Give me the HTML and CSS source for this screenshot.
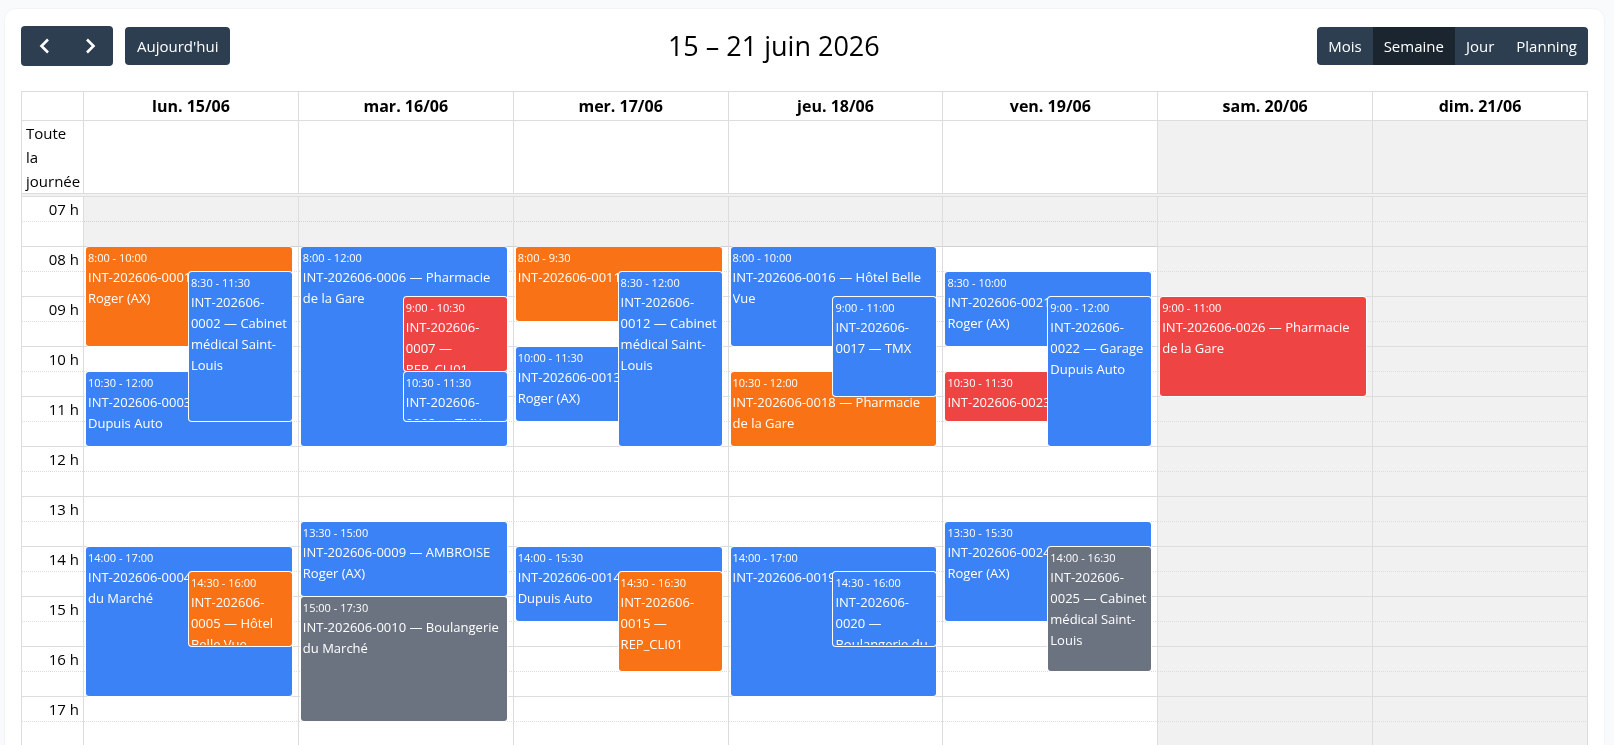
FILE: index.html
```html
<!DOCTYPE html>
<html lang="fr">
<head>
<meta charset="utf-8">
<title>Planning des interventions</title>
<meta name="viewport" content="width=device-width, initial-scale=1">
<link rel="stylesheet" href="styles.css">
</head>
<body>
<main class="card">
  <header class="toolbar">
    <div class="toolbar-start">
      <div class="btn-group">
        <button type="button" class="btn btn-icon" aria-label="Précédent"><svg class="icon" viewBox="0 0 24 24" aria-hidden="true"><path d="M16 5.500 9.500 12l6.500 6.500"/></svg></button>
        <button type="button" class="btn btn-icon" aria-label="Suivant"><svg class="icon" viewBox="0 0 24 24" aria-hidden="true"><path d="M9 5.500 15.500 12l-6.500 6.500"/></svg></button>
      </div>
      <button type="button" class="btn btn-today">Aujourd'hui</button>
    </div>
    <h2 class="title">15 – 21 juin 2026</h2>
    <div class="toolbar-end">
      <div class="btn-group">
        <button type="button" class="btn">Mois</button>
        <button type="button" class="btn active" aria-pressed="true">Semaine</button>
        <button type="button" class="btn">Jour</button>
        <button type="button" class="btn">Planning</button>
      </div>
    </div>
  </header>

  <table class="calendar">
    <thead>
      <tr>
        <th class="axis"></th>
        <th>lun. 15/06</th>
        <th>mar. 16/06</th>
        <th>mer. 17/06</th>
        <th>jeu. 18/06</th>
        <th>ven. 19/06</th>
        <th>sam. 20/06</th>
        <th>dim. 21/06</th>
      </tr>
    </thead>
    <tbody>
      <tr>
        <td class="all-day">Toute la journée</td>
        <td></td><td></td><td></td><td></td><td></td>
        <td class="closed"></td><td class="closed"></td>
      </tr>
      <tr><td class="divider" colspan="8"></td></tr>
      <tr class="times">
        <td>
          <div class="hours lines">
            <span>07 h</span><span>08 h</span><span>09 h</span><span>10 h</span><span>11 h</span><span>12 h</span>
            <span>13 h</span><span>14 h</span><span>15 h</span><span>16 h</span><span>17 h</span>
          </div>
        </td>
        <td>
          <div class="day lines">
            <a class="event orange" style="grid-row: 3 / span 4"><time>8:00 - 10:00</time><span>INT-202606-0001 — AMBROISE Roger (AX)</span></a>
            <a class="event blue half" style="grid-row: 4 / span 6"><time>8:30 - 11:30</time><span>INT-202606-0002 — Cabinet médical Saint-Louis</span></a>
            <a class="event blue" style="grid-row: 8 / span 3"><time>10:30 - 12:00</time><span>INT-202606-0003 — Garage Dupuis Auto</span></a>
            <a class="event blue" style="grid-row: 15 / span 6"><time>14:00 - 17:00</time><span>INT-202606-0004 — Boulangerie du Marché</span></a>
            <a class="event orange half" style="grid-row: 16 / span 3"><time>14:30 - 16:00</time><span>INT-202606-0005 — Hôtel Belle Vue</span></a>
          </div>
        </td>
        <td>
          <div class="day lines">
            <a class="event blue" style="grid-row: 3 / span 8"><time>8:00 - 12:00</time><span>INT-202606-0006 — Pharmacie de la Gare</span></a>
            <a class="event red half" style="grid-row: 5 / span 3"><time>9:00 - 10:30</time><span>INT-202606-0007 — REP_CLI01</span></a>
            <a class="event blue half" style="grid-row: 8 / span 2"><time>10:30 - 11:30</time><span>INT-202606-0008 — TMX</span></a>
            <a class="event blue" style="grid-row: 14 / span 3"><time>13:30 - 15:00</time><span>INT-202606-0009 — AMBROISE Roger (AX)</span></a>
            <a class="event gray" style="grid-row: 17 / span 5"><time>15:00 - 17:30</time><span>INT-202606-0010 — Boulangerie du Marché</span></a>
          </div>
        </td>
        <td>
          <div class="day lines">
            <a class="event orange" style="grid-row: 3 / span 3"><time>8:00 - 9:30</time><span>INT-202606-0011 — TMX</span></a>
            <a class="event blue half" style="grid-row: 4 / span 7"><time>8:30 - 12:00</time><span>INT-202606-0012 — Cabinet médical Saint-Louis</span></a>
            <a class="event blue" style="grid-row: 7 / span 3"><time>10:00 - 11:30</time><span>INT-202606-0013 — AMBROISE Roger (AX)</span></a>
            <a class="event blue" style="grid-row: 15 / span 3"><time>14:00 - 15:30</time><span>INT-202606-0014 — Garage Dupuis Auto</span></a>
            <a class="event orange half" style="grid-row: 16 / span 4"><time>14:30 - 16:30</time><span>INT-202606-0015 — REP_CLI01</span></a>
          </div>
        </td>
        <td>
          <div class="day lines">
            <a class="event blue" style="grid-row: 3 / span 4"><time>8:00 - 10:00</time><span>INT-202606-0016 — Hôtel Belle Vue</span></a>
            <a class="event blue half" style="grid-row: 5 / span 4"><time>9:00 - 11:00</time><span>INT-202606-0017 — TMX</span></a>
            <a class="event orange" style="grid-row: 8 / span 3"><time>10:30 - 12:00</time><span>INT-202606-0018 — Pharmacie de la Gare</span></a>
            <a class="event blue" style="grid-row: 15 / span 6"><time>14:00 - 17:00</time><span>INT-202606-0019 — TMX</span></a>
            <a class="event blue half" style="grid-row: 16 / span 3"><time>14:30 - 16:00</time><span>INT-202606-0020 — Boulangerie du Marché</span></a>
          </div>
        </td>
        <td>
          <div class="day lines">
            <a class="event blue" style="grid-row: 4 / span 3"><time>8:30 - 10:00</time><span>INT-202606-0021 — AMBROISE Roger (AX)</span></a>
            <a class="event blue half" style="grid-row: 5 / span 6"><time>9:00 - 12:00</time><span>INT-202606-0022 — Garage Dupuis Auto</span></a>
            <a class="event red" style="grid-row: 8 / span 2"><time>10:30 - 11:30</time><span>INT-202606-0023 — TMX</span></a>
            <a class="event blue" style="grid-row: 14 / span 4"><time>13:30 - 15:30</time><span>INT-202606-0024 — AMBROISE Roger (AX)</span></a>
            <a class="event gray half" style="grid-row: 15 / span 5"><time>14:00 - 16:30</time><span>INT-202606-0025 — Cabinet médical Saint-Louis</span></a>
          </div>
        </td>
        <td>
          <div class="day lines closed">
            <a class="event red" style="grid-row: 5 / span 4"><time>9:00 - 11:00</time><span>INT-202606-0026 — Pharmacie de la Gare</span></a>
          </div>
        </td>
        <td><div class="day lines closed"></div></td>
      </tr>
    </tbody>
  </table>
</main>
</body>
</html>
```
FILE: styles.css
```css
:root {
  --line: #ddd;
  --closed: #f1f1f1;
  --slot: 25px;
}

* { box-sizing: border-box; }

body {
  margin: 0;
  height: 100vh;
  overflow: hidden;
  padding: 8px 9px 0 4px;
  background: #f8fafc;
  color: #000;
  font: 15px/24px "Open Sans", "Noto Sans", sans-serif;
}

.card {
  padding: 16px;
  background: #fff;
  border: 1px solid #f2f4f7;
  border-radius: 12px;
}

.toolbar {
  display: grid;
  grid-template-columns: auto auto auto;
  justify-content: space-between;
  align-items: center;
  margin-bottom: 24px;
}

.toolbar-start {
  display: flex;
  align-items: center;
  gap: 12px;
}

.title {
  margin: 0;
  font-size: 27px;
  font-weight: 400;
  line-height: 42px;
}

.btn-group {
  display: flex;
  border-radius: 4px;
  overflow: hidden;
}

.btn {
  padding: 7px 11px;
  border: 0;
  border-radius: 4px;
  background: #2c3e50;
  color: #fff;
  font: inherit;
}

.btn-group .btn { border-radius: 0; }

.btn.active { background: #1a252f; }

.btn-today { padding: 7px 12px; }

.btn-icon {
  display: flex;
  padding: 8px 11px;
}

.icon {
  width: 24px;
  height: 24px;
  fill: none;
  stroke: currentColor;
  stroke-width: 2.6;
}

.calendar {
  width: 100%;
  table-layout: fixed;
  border-collapse: separate;
  border-spacing: 0;
  border: solid var(--line);
  border-width: 1px 0 0 1px;
}

.calendar th,
.calendar td {
  padding: 0;
  border: solid var(--line);
  border-width: 0 1px 1px 0;
  vertical-align: top;
}

.calendar th {
  padding: 2px 4px;
  font-size: 16px;
  font-weight: 700;
}

.calendar .axis { width: 62px; }

.calendar .all-day { padding: 0 4px; }

.calendar .divider {
  height: 3px;
  background: var(--closed);
}

.closed { background-color: var(--closed); }

.lines {
  background-image:
    linear-gradient(var(--line) 1px, transparent 0),
    conic-gradient(at 1px 1px, transparent 75%, var(--line) 0);
  background-size: 100% 50px, 2px 50px;
  background-position: 0 49px, 0 24px;
}

.hours {
  display: grid;
  grid-auto-rows: 50px;
  padding-right: 4px;
  text-align: right;
}

.day {
  display: grid;
  grid-template-columns: repeat(2, minmax(0, 1fr));
  grid-template-rows: repeat(22, var(--slot));
  padding: 0 6px 0 2px;
}

/* The hour before opening */
.day:not(.closed)::before {
  content: "";
  grid-area: 1 / 1 / 3 / 3;
  margin: 0 -6px 0 -2px;
  background: var(--closed);
  mix-blend-mode: multiply;
}

.event {
  grid-column: 1 / -1;
  margin-bottom: 1px;
  padding: 2px 2px 1px;
  border-radius: 3px;
  box-shadow: 0 0 0 1px #fff;
  color: #fff;
  font-size: 13px;
  line-height: 21px;
  display: flex;
  flex-direction: column;
  min-height: 0;
}

.event time {
  font-size: 11px;
  line-height: 18px;
  white-space: nowrap;
}

.event span {
  min-height: 0;
  overflow: hidden;
}

.half {
  grid-column: 2;
  z-index: 1;
}

.blue { background-color: #3b82f6; }
.orange { background-color: #f97316; }
.red { background-color: #ef4444; }
.gray { background-color: #6b7280; }
```
